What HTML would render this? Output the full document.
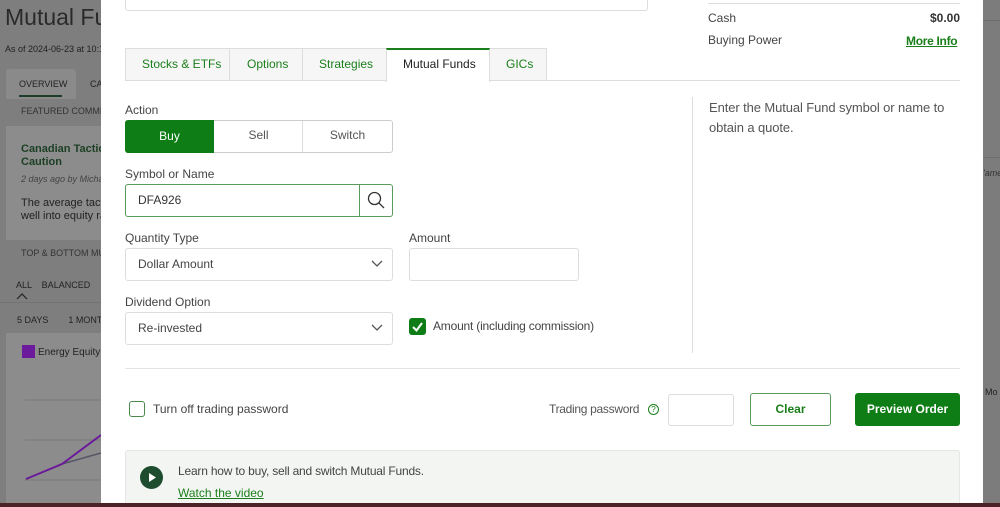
<!DOCTYPE html>
<html><head><meta charset="utf-8"><style>
*{box-sizing:border-box;margin:0;padding:0}
body{width:1000px;height:507px;overflow:hidden;position:relative;background:#858585;font-family:"Liberation Sans",sans-serif;font-size:12px;color:#333}
.a{position:absolute}
.l{color:#444;font-size:12px}
.box{position:absolute;border:1px solid #ccc;border-radius:3px;background:#fff}
.g{color:#1a7f1a}
</style></head><body>
<div class="a" style="left:0;top:0;width:101px;height:507px;background:#7e7e7e"></div>
<div class="a" style="left:5px;top:4px;font-size:23px;color:#2a2a2a">Mutual Fu</div>
<div class="a" style="left:5px;top:44px;font-size:9px;color:#222">As of 2024-06-23 at 10:1</div>
<div class="a" style="left:6px;top:69px;width:70px;height:30px;background:#8a8a8a;border-radius:3px 3px 0 0"></div>
<div class="a" style="left:19px;top:79px;font-size:9px;color:#222">OVERVIEW</div>
<div class="a" style="left:19px;top:95px;width:43px;height:2px;background:#1d3d2a"></div>
<div class="a" style="left:90px;top:79px;font-size:9px;color:#222">CA</div>
<div class="a" style="left:21px;top:106px;font-size:9px;color:#333">FEATURED COMMEN</div>
<div class="a" style="left:6px;top:126px;width:95px;height:114px;background:#8c8c8c"></div>
<div class="a" style="left:21px;top:143px;font-size:11px;font-weight:bold;color:#1c3f24;line-height:13px">Canadian Tactica<br>Caution</div>
<div class="a" style="left:21px;top:174px;font-size:9px;font-style:italic;color:#444">2 days ago by Micha</div>
<div class="a" style="left:21px;top:197px;font-size:11px;color:#222;line-height:13px">The average tacti<br>well into equity ra</div>
<div class="a" style="left:21px;top:248px;font-size:9px;color:#333">TOP &amp; BOTTOM MU</div>
<div class="a" style="left:16px;top:280px;font-size:9px;color:#222">ALL &nbsp;&nbsp; BALANCED</div>
<svg class="a" style="left:16px;top:292px" width="12" height="8"><polyline points="1,7 6,2 11,7" fill="none" stroke="#222" stroke-width="1.2"/></svg>
<div class="a" style="left:0;top:302px;width:101px;height:1px;background:#737373"></div>
<div class="a" style="left:17px;top:315px;font-size:9px;color:#222">5 DAYS &nbsp;&nbsp;&nbsp;&nbsp;&nbsp;&nbsp; 1 MONT</div>
<div class="a" style="left:6px;top:333px;width:95px;height:170px;background:#8c8c8c"></div>
<div class="a" style="left:22px;top:345px;width:13px;height:13px;background:#6a1a9a"></div>
<div class="a" style="left:38px;top:347px;font-size:10px;color:#222">Energy Equity</div>
<svg class="a" style="left:0;top:360px" width="101" height="145"><g stroke="#7a7a7a"><line x1="25" y1="40" x2="101" y2="40"/><line x1="25" y1="80" x2="101" y2="80"/><line x1="25" y1="120" x2="101" y2="120"/></g><polyline points="26,119 62,104 101,93" fill="none" stroke="#556" stroke-width="1.5"/><polyline points="26,119 62,104 101,75" fill="none" stroke="#6a1a9a" stroke-width="2"/></svg>
<div class="a" style="left:983px;top:0;width:17px;height:507px;background:#7c7c7c"></div>
<div class="a" style="left:983px;top:20px;width:17px;height:1px;background:#6e6e6e"></div>
<div class="a" style="left:983px;top:157px;width:17px;height:1px;background:#6e6e6e"></div>
<div class="a" style="left:983px;top:168px;font-size:9px;font-style:italic;color:#333">'ame</div>
<div class="a" style="left:985px;top:387px;font-size:9px;color:#222">Mo</div>
<div class="a" style="left:0;top:503px;width:1000px;height:4px;background:#4a2228"></div>
<div class="a" style="left:101px;top:0;width:882px;height:503px;background:#fff"></div>
<div class="box" style="left:125px;top:-5px;width:523px;height:16px;border-color:#ddd"></div>
<div class="a" style="left:708px;top:3px;width:252px;height:1px;background:#ddd"></div>
<div class="a l" style="left:708px;top:11px">Cash</div>
<div class="a" style="left:930px;top:11px;font-weight:bold;color:#333">$0.00</div>
<div class="a l" style="left:708px;top:33px">Buying Power</div>
<div class="a g" style="left:906px;top:34px;font-weight:bold;text-decoration:underline;letter-spacing:-0.3px">More Info</div>
<div class="a" style="left:125px;top:80px;width:835px;height:1px;background:#ddd"></div>
<div class="a" style="left:125px;top:48px;width:262px;height:33px;background:#f6f6f6;border:1px solid #ddd"></div>
<div class="a" style="left:229px;top:48px;width:1px;height:33px;background:#ddd"></div>
<div class="a" style="left:302px;top:48px;width:1px;height:33px;background:#ddd"></div>
<div class="a g" style="left:142px;top:57px">Stocks &amp; ETFs</div>
<div class="a g" style="left:247px;top:57px">Options</div>
<div class="a g" style="left:319px;top:57px">Strategies</div>
<div class="a" style="left:386px;top:48px;width:104px;height:34px;background:#fff;border:1px solid #ddd;border-bottom:none;border-top:2px solid #1a7f1a"></div>
<div class="a" style="left:403px;top:57px;color:#222">Mutual Funds</div>
<div class="a" style="left:490px;top:48px;width:57px;height:33px;background:#f6f6f6;border:1px solid #ddd;border-left:none"></div>
<div class="a g" style="left:506px;top:57px">GICs</div>
<div class="a l" style="left:125px;top:103px">Action</div>
<div class="box" style="left:125px;top:120px;width:268px;height:33px"></div>
<div class="a" style="left:125px;top:120px;width:89px;height:33px;background:#0f7d16;border-radius:3px 0 0 3px;color:#fff;text-align:center;line-height:33px">Buy</div>
<div class="a" style="left:302px;top:121px;width:1px;height:31px;background:#ddd"></div>
<div class="a" style="left:214px;top:120px;width:89px;line-height:31px;text-align:center;color:#555">Sell</div>
<div class="a" style="left:303px;top:120px;width:89px;line-height:31px;text-align:center;color:#555">Switch</div>
<div class="a l" style="left:125px;top:167px">Symbol or Name</div>
<div class="box" style="left:125px;top:184px;width:268px;height:33px;border-color:#5a9a5a"></div>
<div class="a" style="left:359px;top:185px;width:1px;height:31px;background:#5a9a5a"></div>
<div class="a" style="left:138px;top:193px;color:#333">DFA926</div>
<svg class="a" style="left:367px;top:191px" width="18" height="18"><circle cx="7.5" cy="7.5" r="6" fill="none" stroke="#333" stroke-width="1.3"/><line x1="12" y1="12" x2="17" y2="17" stroke="#333" stroke-width="1.3"/></svg>
<div class="a l" style="left:125px;top:231px">Quantity Type</div>
<div class="box" style="left:125px;top:248px;width:268px;height:33px;border-color:#ddd"></div>
<div class="a" style="left:138px;top:257px;color:#444">Dollar Amount</div>
<svg class="a" style="left:371px;top:260px" width="12" height="8"><polyline points="1,1 6,6 11,1" fill="none" stroke="#555" stroke-width="1.3"/></svg>
<div class="a l" style="left:409px;top:231px">Amount</div>
<div class="box" style="left:409px;top:248px;width:170px;height:33px;border-color:#ddd"></div>
<div class="a l" style="left:125px;top:295px">Dividend Option</div>
<div class="box" style="left:125px;top:312px;width:268px;height:33px;border-color:#ddd"></div>
<div class="a" style="left:138px;top:321px;color:#444">Re-invested</div>
<svg class="a" style="left:371px;top:324px" width="12" height="8"><polyline points="1,1 6,6 11,1" fill="none" stroke="#555" stroke-width="1.3"/></svg>
<div class="a" style="left:409px;top:318px;width:17px;height:17px;background:#0f7d16;border-radius:3px"></div>
<svg class="a" style="left:409px;top:318px" width="17" height="17"><polyline points="4,9 7.5,12.5 13,5" fill="none" stroke="#fff" stroke-width="2"/></svg>
<div class="a l" style="left:433px;top:319px;letter-spacing:-0.2px">Amount (including commission)</div>
<div class="a" style="left:692px;top:97px;width:1px;height:256px;background:#ddd"></div>
<div class="a" style="left:709px;top:98px;font-size:13px;color:#555;line-height:20px;letter-spacing:-0.1px">Enter the Mutual Fund symbol or name to<br>obtain a quote.</div>
<div class="a" style="left:125px;top:368px;width:835px;height:1px;background:#e3e3e3"></div>
<div class="a" style="left:129px;top:401px;width:16px;height:16px;border:1px solid #4a8a4a;border-radius:3px"></div>
<div class="a l" style="left:153px;top:402px">Turn off trading password</div>
<div class="a" style="left:549px;top:402px;color:#555;letter-spacing:-0.3px">Trading password</div>
<div class="a" style="left:648px;top:404px;width:11px;height:11px;border:1px solid #1a7f1a;border-radius:50%;font-size:8px;text-align:center;line-height:9px;color:#1a7f1a">?</div>
<div class="box" style="left:668px;top:394px;width:66px;height:32px;border-color:#ddd"></div>
<div class="box" style="left:750px;top:393px;width:81px;height:33px;border-color:#5a9a5a;text-align:center;line-height:31px;color:#1a7f1a;font-weight:bold">Clear</div>
<div class="a" style="left:855px;top:393px;width:105px;height:33px;background:#0f7d16;border-radius:3px;text-align:center;line-height:33px;color:#fff;font-weight:bold">Preview Order</div>
<div class="a" style="left:125px;top:450px;width:835px;height:53px;background:#f3f5f3;border:1px solid #e6e6e6;border-bottom:none;border-radius:3px 3px 0 0"></div>
<svg class="a" style="left:140px;top:466px" width="23" height="23"><circle cx="11.5" cy="11.5" r="11.5" fill="#1d4d2e"/><polygon points="9,7 16,11.5 9,16" fill="#fff"/></svg>
<div class="a" style="left:178px;top:464px;color:#444;letter-spacing:-0.2px">Learn how to buy, sell and switch Mutual Funds.</div>
<div class="a g" style="left:178px;top:486px;text-decoration:underline">Watch the video</div>
</body></html>
